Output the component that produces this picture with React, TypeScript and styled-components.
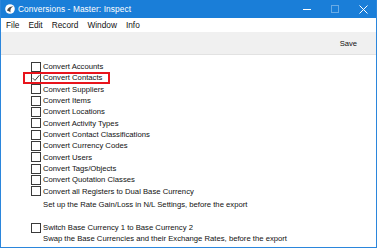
import React from 'react';
import styled, { createGlobalStyle } from 'styled-components';

const GlobalStyle = createGlobalStyle`
    html, body {
        margin: 0;
        padding: 0;
        background: #ffffff;
    }
    #root {
        width: 377px;
        height: 248px;
    }
`

const Window = styled.div`
    width: 377px;
    height: 248px;
    box-sizing: border-box;
    display: flex;
    flex-direction: column;
    border: 1px solid #2b86dc;
    border-top: none;
    background: #ffffff;
    font-family: "Liberation Sans", Arial, sans-serif;
    color: #111;
    overflow: hidden;
`
const TitleBar = styled.div`
    height: 18px;
    margin: 0 -1px;
    background: #1a7ed8;
    display: flex;
    align-items: center;
    color: #ffffff;
    font-size: 8.3px;
    flex-shrink: 0;
`
const AppIcon = styled.div`
    width: 10px;
    height: 10px;
    margin: 0 3px 0 5px;
    display: flex;
`
const Title = styled.span`
    flex: 1;
    letter-spacing: 0.1px;
`
const Controls = styled.div`
    display: flex;
    align-items: center;
    height: 100%;
`
const ControlButton = styled.div<{ $faded?: boolean }>`
    width: 28px;
    height: 100%;
    display: flex;
    align-items: center;
    justify-content: center;
    opacity: ${p => (p.$faded ? 0.35 : 1)};
`
const MenuBar = styled.div`
    height: 14px;
    display: flex;
    align-items: center;
    padding-left: 5px;
    gap: 9px;
    font-size: 8.3px;
    flex-shrink: 0;
`
const MenuItem = styled.span``

const Toolbar = styled.div`
    height: 22px;
    background: #f0f0f0;
    border-bottom: 1px solid #e2e2e2;
    display: flex;
    align-items: center;
    justify-content: flex-end;
    padding-right: 19px;
    font-size: 7.6px;
    flex-shrink: 0;
`
const Content = styled.div`
    flex: 1;
    padding: 6px 0 0 30px;
    font-size: 7.7px;
    display: flex;
    flex-direction: column;
`
const Row = styled.div<{ $gap?: number }>`
    height: 11.33px;
    display: flex;
    align-items: center;
    gap: 2px;
    position: relative;
    margin-top: ${p => p.$gap ?? 0}px;
`
const Highlight = styled.div`
    position: absolute;
    left: -8px;
    top: -0.5px;
    width: 83px;
    height: 8px;
    border: 2px solid #e8141c;
    pointer-events: none;
`
const Box = styled.div`
    width: 8px;
    height: 8px;
    border: 1px solid #3a3a3a;
    background: #ffffff;
    display: flex;
    align-items: center;
    justify-content: center;
    flex-shrink: 0;
`
const Note = styled.div<{ $gap: number }>`
    margin: ${p => p.$gap}px 0 0 12px;
    height: 11px;
    display: flex;
    align-items: center;
`

const items = [
    'Convert Accounts',
    'Convert Contacts',
    'Convert Suppliers',
    'Convert Items',
    'Convert Locations',
    'Convert Activity Types',
    'Convert Contact Classifications',
    'Convert Currency Codes',
    'Convert Users',
    'Convert Tags/Objects',
    'Convert Quotation Classes',
    'Convert all Registers to Dual Base Currency',
]

const Check = () => (
    <svg width="8" height="8" viewBox="0 0 8 8">
        <path d="M0.8 4.2 L3 6.4 L7.4 1.2" fill="none" stroke="#222" strokeWidth="0.9" />
    </svg>
)

const App = () => {
    return (
        <Window>
            <GlobalStyle />
            <TitleBar>
                <AppIcon>
                    <svg width="10" height="10" viewBox="0 0 10 10">
                        <circle cx="5" cy="5" r="4.8" fill="#ffffff" />
                        <path d="M2 6.5 C3 3 6 2 8.5 2.5 C6 3.5 5 5 5.5 8.5 C4.5 7.5 3 7 2 6.5 Z" fill="#4a4a4a" />
                    </svg>
                </AppIcon>
                <Title>Conversions - Master: Inspect</Title>
                <Controls>
                    <ControlButton>
                        <svg width="8" height="8" viewBox="0 0 8 8">
                            <path d="M0 4.5 H8" stroke="#fff" strokeWidth="1" />
                        </svg>
                    </ControlButton>
                    <ControlButton $faded>
                        <svg width="8" height="8" viewBox="0 0 8 8">
                            <rect x="0.5" y="0.5" width="7" height="7" fill="none" stroke="#fff" strokeWidth="1" />
                        </svg>
                    </ControlButton>
                    <ControlButton>
                        <svg width="9" height="9" viewBox="0 0 9 9">
                            <path d="M0.5 0.5 L8.5 8.5 M8.5 0.5 L0.5 8.5" stroke="#fff" strokeWidth="1" />
                        </svg>
                    </ControlButton>
                </Controls>
            </TitleBar>
            <MenuBar>
                <MenuItem>File</MenuItem>
                <MenuItem>Edit</MenuItem>
                <MenuItem>Record</MenuItem>
                <MenuItem>Window</MenuItem>
                <MenuItem>Info</MenuItem>
            </MenuBar>
            <Toolbar>Save</Toolbar>
            <Content>
                {items.map((label, i) => (
                    <Row key={label}>
                        {i === 1 && <Highlight />}
                        <Box>{i === 1 && <Check />}</Box>
                        <span>{label}</span>
                    </Row>
                ))}
                <Note $gap={2}>Set up the Rate Gain/Loss in N/L Settings, before the export</Note>
                <Row $gap={12}>
                    <Box />
                    <span>Switch Base Currency 1 to Base Currency 2</span>
                </Row>
                <Note $gap={0}>Swap the Base Currencies and their Exchange Rates, before the export</Note>
            </Content>
        </Window>
    )
};

export default App;
